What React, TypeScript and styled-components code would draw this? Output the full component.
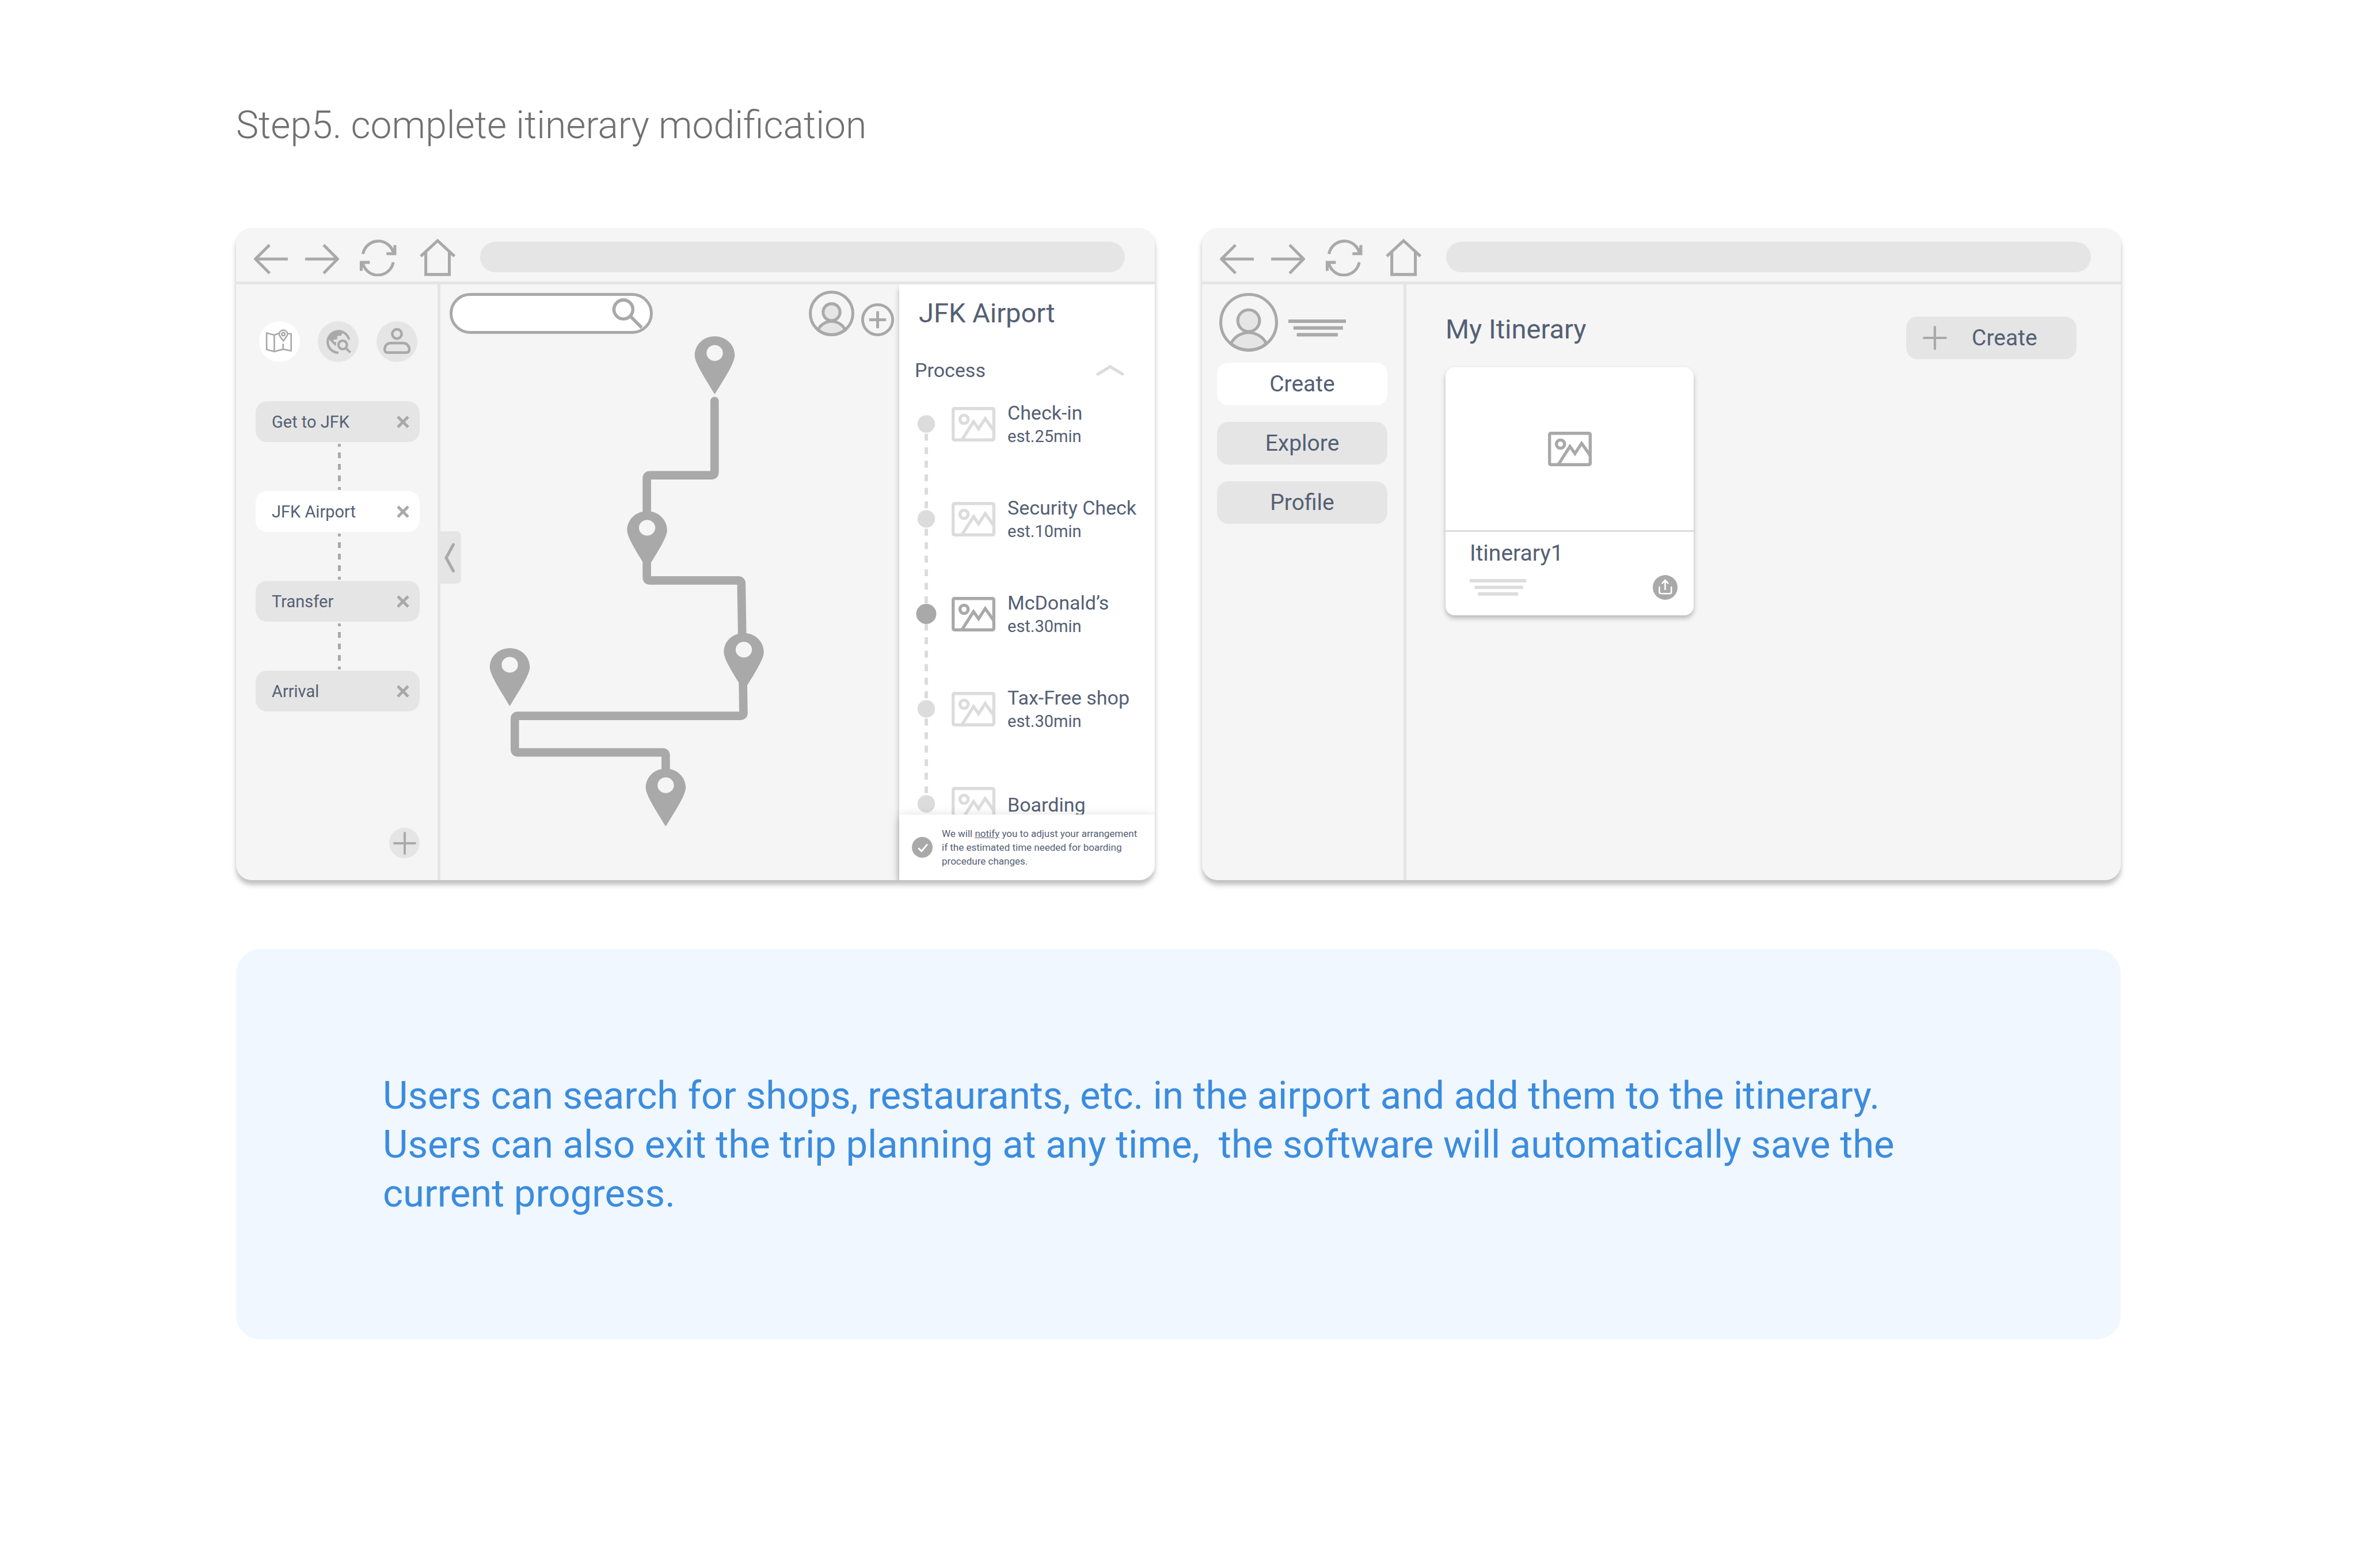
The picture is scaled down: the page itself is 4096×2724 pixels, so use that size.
import React from "react";
import styled, { createGlobalStyle } from "styled-components";
import { MdTravelExplore } from "react-icons/md";

const color = {
  line: "#a9a9a9",
  soft: "#dcdcdc",
  fill: "#e5e5e5",
  surface: "#f5f5f5",
  ink: "#546074",
  heading: "#707070",
  blue: "#3b8cde",
  note: "#f0f7ff",
};

const GlobalStyle = createGlobalStyle`
  * { box-sizing: border-box; }
  body { margin: 0; background: #fff; font-family: Roboto, "Liberation Sans", sans-serif; color: ${color.ink}; }
  h1, h2, h3, p, ul, ol { margin: 0; padding: 0; font-weight: 400; }
  ul, ol { list-style: none; }
  button, input { font: inherit; color: inherit; border: 0; padding: 0; margin: 0; background: none; }
  button { cursor: pointer; }
  svg { display: block; flex: none; fill: none; stroke: ${color.line}; }
`;

/* ---------- page ---------- */

const Page = styled.main`
  padding: 180px 412px 180px 410px;
`;

const StepTitle = styled.h1`
  font-size: 66px;
  line-height: 76px;
  font-weight: 300;
  color: ${color.heading};
`;

const Screens = styled.div`
  display: grid;
  grid-template-columns: 1fr 1fr;
  gap: 82px;
  margin-top: 140px;
`;

const Note = styled.p`
  margin-top: 120px;
  padding: 212px 255px 211px;
  border-radius: 43px;
  background: ${color.note};
  color: ${color.blue};
  font-size: 67px;
  line-height: 85px;
`;

const NoteLine = styled.span`
  display: block;
  white-space: nowrap;
`;

/* ---------- browser frame ---------- */

const Frame = styled.section`
  display: flex;
  flex-direction: column;
  overflow: hidden;
  border-radius: 27px;
  background: ${color.surface};
  box-shadow: 0 8px 9px rgba(0, 0, 0, 0.25);
`;

const Toolbar = styled.header`
  display: flex;
  align-items: center;
  gap: 38px;
  height: 98px;
  padding: 8px 52px 0 31px;
  border-bottom: 5px solid ${color.fill};
`;

const ToolbarNav = styled.nav`
  display: flex;
  gap: 30px;
`;

const AddressBar = styled.input`
  flex: 1;
  min-width: 0;
  height: 53px;
  padding: 0 26px;
  border-radius: 27px;
  background: ${color.fill};
  font-size: 29px;
`;

const FrameBody = styled.div`
  display: flex;
  flex: 1;
  min-height: 1035px;
`;

const Sidebar = styled.aside<{ $pad: string }>`
  display: flex;
  flex-direction: column;
  flex: none;
  width: 355px;
  padding: ${(p) => p.$pad};
  border-right: 5px solid ${color.fill};
`;

const BackIcon = () => (
  <svg width="59" height="66" viewBox="498 467 67 74" strokeWidth="5.7">
    <path d="M565 507.5H501M529 479.5 501 507.3 529 535.5" />
  </svg>
);

const ForwardIcon = () => (
  <svg width="59" height="66" viewBox="598 467 67 74" strokeWidth="5.7">
    <path d="M598 507.5H662M634.5 479.5 662 507.3 634.5 535.5" />
  </svg>
);

const RefreshIcon = () => (
  <svg width="75" height="66" viewBox="698.5 467 84.6 74" strokeWidth="5.7">
    <path d="M711.5 497.5A30.5 30.5 0 0 1 771.5 497M774 480V497H757.5M770.8 513.7A30.5 30.5 0 0 1 711 515M708 530.5V514H724.8" />
  </svg>
);

const HomeIcon = () => (
  <svg width="72" height="66" viewBox="817 467 81 74" strokeWidth="5.7">
    <path d="M824.8 502 857.6 471.5 890.6 502M834.6 494V537.6H880.6V494" />
  </svg>
);

function BrowserFrame({ label, children }: { label: string; children: React.ReactNode }) {
  return (
    <Frame aria-label={label}>
      <Toolbar>
        <ToolbarNav>
          <button aria-label="Back"><BackIcon /></button>
          <button aria-label="Forward"><ForwardIcon /></button>
          <button aria-label="Reload"><RefreshIcon /></button>
          <button aria-label="Home"><HomeIcon /></button>
        </ToolbarNav>
        <AddressBar aria-label="Address" />
      </Toolbar>
      <FrameBody>{children}</FrameBody>
    </Frame>
  );
}

/* ---------- shared icons ---------- */

const Avatar = ({ size, stroke }: { size: number; stroke: number }) => (
  <svg width={size} height={size} viewBox="0 0 116 116" strokeWidth={stroke}>
    <path d="M23 100A39 39 0 0 1 93 100A55 55 0 0 1 23 100Z" fill={color.fill} />
    <circle cx="58" cy="54.7" r="21.5" fill={color.fill} />
    <circle cx="58" cy="58" r={58 - stroke / 2} />
  </svg>
);

const Picture = ({ tone }: { tone: string }) => (
  <svg width="76" height="60" viewBox="0 0 85 67" strokeWidth="6" style={{ stroke: tone }}>
    <rect x="3" y="3" width="79" height="61" rx="2.5" />
    <circle cx="24.2" cy="24" r="8" />
    <path d="M20.5 63 42.6 28.5 52.4 42.5 65.3 22.5 82 46" />
  </svg>
);

const PlusIcon = ({ size, stroke }: { size: number; stroke: number }) => (
  <svg width={size} height={size} viewBox="0 0 40 40" strokeWidth={stroke} strokeLinecap="round">
    <path d="M20 2V38M2 20H38" />
  </svg>
);

const ScribbleIcon = ({ width, tone }: { width: number; tone: string }) => (
  <svg width={width} height={width * 0.4} viewBox="0 0 113 45" strokeWidth="6.8" style={{ stroke: tone }}>
    <path d="M0 9H113M10 22.2H107M16.5 35.5H97" />
  </svg>
);

/* ---------- planner screen ---------- */

const ModeRow = styled.div`
  display: flex;
  gap: 31px;
  padding-left: 6px;
`;

const ModeButton = styled.button<{ $active?: boolean }>`
  display: grid;
  place-items: center;
  width: 71px;
  height: 71px;
  border-radius: 50%;
  background: ${(p) => (p.$active ? "#fff" : color.fill)};
  color: ${color.line};
`;

const GlobeIcon = styled(MdTravelExplore)`
  width: 50px;
  height: 50px;
  fill: ${color.line};
  stroke: none;
`;

const StopList = styled.ol`
  margin-top: 68px;
`;

const Stop = styled.li<{ $active?: boolean }>`
  display: flex;
  align-items: center;
  justify-content: space-between;
  height: 71px;
  padding: 0 18px 0 28px;
  border-radius: 20px;
  background: ${(p) => (p.$active ? "#fff" : color.fill)};
  font-size: 29px;
  line-height: 34px;
`;

const Connector = styled.li`
  height: 85px;
  padding: 3px 0 0 143px;
`;

const AddStop = styled.button`
  display: grid;
  place-items: center;
  align-self: flex-end;
  width: 53px;
  height: 53px;
  margin-top: auto;
  border-radius: 50%;
  background: ${color.fill};
`;

const MapArea = styled.div`
  position: relative;
  flex: 1;
  min-width: 0;
`;

const MapTools = styled.div`
  display: flex;
  align-items: center;
  justify-content: space-between;
  height: 90px;
  padding: 11px 9px 0 16px;
`;

const SearchBox = styled.div`
  display: flex;
  align-items: center;
  width: 353px;
  height: 71px;
  padding-right: 13px;
  border: 5px solid ${color.line};
  border-radius: 36px;
  background: #fff;
`;

const SearchInput = styled.input`
  flex: 1;
  min-width: 0;
  padding-left: 28px;
  font-size: 29px;
`;

const Account = styled.div`
  display: flex;
  align-items: flex-end;
  gap: 12px;
`;

const CollapseTab = styled.button`
  position: absolute;
  left: 0;
  top: 429px;
  display: grid;
  place-items: center;
  width: 36px;
  height: 91px;
  padding-right: 5px;
  border-radius: 0 8px 8px 0;
  background: ${color.fill};
`;

const RouteDrawing = styled.svg`
  width: 100%;
  overflow: visible;
`;

const Panel = styled.aside`
  display: flex;
  flex-direction: column;
  flex: none;
  width: 444px;
  background: #fff;
  box-shadow: 0 8px 9px rgba(0, 0, 0, 0.25);
`;

const PanelTitle = styled.h2`
  padding: 21px 0 0 34px;
  font-size: 47px;
  line-height: 58px;
`;

const ProcessHeader = styled.div`
  display: flex;
  align-items: center;
  justify-content: space-between;
  margin-top: 49px;
  padding: 0 53px 0 27px;
`;

const ProcessTitle = styled.h3`
  font-size: 34px;
  line-height: 42px;
`;

const StepsArea = styled.div`
  display: flex;
  flex: 1 1 0;
  align-items: flex-start;
  gap: 26px;
  min-height: 0;
  margin-top: -10px;
  padding-left: 29px;
  overflow: hidden;
`;

const StepRow = styled.li`
  display: flex;
  align-items: center;
  gap: 21px;
  height: 165px;
`;

const StepText = styled.div`
  padding-top: 3px;
`;

const StepName = styled.p`
  font-size: 34px;
  line-height: 41px;
  white-space: nowrap;
`;

const StepTime = styled.p`
  font-size: 29px;
  line-height: 41px;
`;

const Notice = styled.footer`
  display: flex;
  align-items: center;
  gap: 16px;
  height: 114px;
  padding-left: 22px;
  background: #fff;
  box-shadow: 0 4px 18px rgba(0, 0, 0, 0.2);
`;

const NoticeText = styled.p`
  font-size: 17px;
  line-height: 24px;
`;

const NoticeLine = styled.span`
  display: block;
  white-space: nowrap;
`;

const NoticeLink = styled.a`
  color: inherit;
  text-decoration: underline;
`;

const MapIcon = () => (
  <svg width="71" height="71" viewBox="0 0 80 80" strokeWidth="3" strokeLinejoin="round">
    <path d="M38.5 24 29.8 27 14.8 23V55.5L29.8 59.5 47 54.8 62.8 58V25.2L57 24M29.8 27V59.5M47 44V54.8" />
    <path d="M47.5 38.5C43 32 39.2 28.5 39.2 24.7A8.4 8.4 0 0 1 55.8 24.7C55.8 28.5 52 32 47.5 38.5Z" />
    <circle cx="47.5" cy="25.3" r="3" />
  </svg>
);

const PersonIcon = () => (
  <svg width="71" height="71" viewBox="0 0 80 80" strokeWidth="5">
    <circle cx="40" cy="24.9" r="9.2" />
    <path d="M28 42.8H52C59 42.8 64 48 64.3 55C64.3 59.5 62 61.5 58 61.5H22C18 61.5 16 59.5 16 55C16 48 21 42.8 28 42.8Z" />
  </svg>
);

const CloseIcon = () => (
  <svg width="22" height="22" viewBox="0 0 22 22" strokeWidth="5">
    <path d="M2 2 20 20M20 2 2 20" />
  </svg>
);

const SearchIcon = () => (
  <svg width="53" height="53" viewBox="1199 583 60 60" strokeWidth="6.4">
    <circle cx="1221.5" cy="605.2" r="18.6" />
    <path d="M1235 618.5 1257.5 641" />
  </svg>
);

const AddCircleIcon = () => (
  <svg width="57" height="57" viewBox="0 0 64 64" strokeWidth="5.5">
    <circle cx="32" cy="32" r="29.3" />
    <path d="M32 15.5V48.5M15.5 32H48.5" />
  </svg>
);

const PINS = [
  { x: 1400.5, y: 659.4 },
  { x: 1268, y: 1001.8 },
  { x: 1457.5, y: 1240.7 },
  { x: 999, y: 1270.4 },
  { x: 1304.5, y: 1506.4 },
];

function Route() {
  return (
    <RouteDrawing viewBox="863 659 899 965" aria-label="Route through the airport">
      <path
        strokeWidth="16.5"
        strokeLinecap="round"
        strokeLinejoin="round"
        d="M1400.2 786V925.6Q1400.2 931.6 1394.2 931.6H1273.5Q1267.5 931.6 1267.5 937.6V1131.7Q1267.5 1137.7 1273.5 1137.7H1446.5Q1452.6 1137.7 1452.7 1143.7L1456.8 1397Q1457 1403 1451 1403H1014.8Q1008.8 1403 1008.8 1409V1468.7Q1008.8 1474.7 1014.8 1474.7H1298.5Q1304.5 1474.7 1304.5 1480.7V1520"
      />
      {PINS.map((pin) => (
        <g key={pin.x} transform={`translate(${pin.x} ${pin.y})`} stroke="none">
          <path
            fill={color.line}
            stroke="none"
            d="M0 0C22 0 39.2 16.5 39.2 37.5C39.2 52 18 84 0 113.5C-18 84-39.2 52-39.2 37.5C-39.2 16.5-22 0 0 0Z"
          />
          <ellipse cy="32.6" rx="16" ry="15.4" fill={color.surface} stroke="none" />
        </g>
      ))}
    </RouteDrawing>
  );
}

const STOPS = ["Get to JFK", "JFK Airport", "Transfer", "Arrival"];

const STEPS = [
  { name: "Check-in", time: "est.25min" },
  { name: "Security Check", time: "est.10min" },
  { name: "McDonald’s", time: "est.30min", current: true },
  { name: "Tax-Free shop", time: "est.30min" },
  { name: "Boarding" },
];

const STEP_HEIGHT = 165;

function StepRail() {
  const center = (i: number) => STEP_HEIGHT / 2 + i * STEP_HEIGHT;
  return (
    <svg width="36" height={STEP_HEIGHT * STEPS.length} aria-hidden="true">
      {STEPS.slice(1).map((step, i) => (
        <path
          key={step.name}
          d={`M18 ${center(i) + 17}V${center(i) + 147}`}
          strokeWidth="6"
          strokeDasharray="12 11.5"
          style={{ stroke: color.soft }}
        />
      ))}
      {STEPS.map((step, i) => (
        <circle
          key={step.name}
          cx="18"
          cy={center(i)}
          r={step.current ? 17.5 : 15.2}
          fill={step.current ? color.line : color.soft}
          style={{ stroke: "none" }}
        />
      ))}
    </svg>
  );
}

function PlannerScreen() {
  return (
    <BrowserFrame label="Itinerary planner">
      <Sidebar $pad="64px 31px 38px 34px">
        <ModeRow>
          <ModeButton $active aria-label="Map"><MapIcon /></ModeButton>
          <ModeButton aria-label="Explore"><GlobeIcon /></ModeButton>
          <ModeButton aria-label="Profile"><PersonIcon /></ModeButton>
        </ModeRow>
        <StopList>
          {STOPS.map((stop, i) => (
            <React.Fragment key={stop}>
              {i > 0 && (
                <Connector aria-hidden="true">
                  <svg width="5" height="80" strokeWidth="5" strokeDasharray="10 10" strokeDashoffset="5">
                    <path d="M2.5 0V80" />
                  </svg>
                </Connector>
              )}
              <Stop $active={stop === "JFK Airport"}>
                {stop}
                <button aria-label={`Remove ${stop}`}><CloseIcon /></button>
              </Stop>
            </React.Fragment>
          ))}
        </StopList>
        <AddStop aria-label="Add stop"><PlusIcon size={40} stroke={4} /></AddStop>
      </Sidebar>
      <MapArea>
        <MapTools>
          <SearchBox>
            <SearchInput type="search" aria-label="Search the map" />
            <button aria-label="Search"><SearchIcon /></button>
          </SearchBox>
          <Account>
            <button aria-label="Account"><Avatar size={79} stroke={7.4} /></button>
            <button aria-label="Add place"><AddCircleIcon /></button>
          </Account>
        </MapTools>
        <Route />
        <CollapseTab aria-label="Collapse sidebar">
          <svg width="20" height="52" viewBox="0 0 20 52" strokeWidth="5" strokeLinecap="round">
            <path d="M16.5 3 4 26 16.5 49" />
          </svg>
        </CollapseTab>
      </MapArea>
      <Panel>
        <PanelTitle>JFK Airport</PanelTitle>
        <ProcessHeader>
          <ProcessTitle>Process</ProcessTitle>
          <button aria-label="Collapse process">
            <svg width="49" height="19" viewBox="0 0 49 19" strokeWidth="5" strokeLinecap="round" style={{ stroke: color.soft }}>
              <path d="M3 16 24.5 3 46 16" />
            </svg>
          </button>
        </ProcessHeader>
        <StepsArea>
          <StepRail />
          <ol>
            {STEPS.map((step) => (
              <StepRow key={step.name}>
                <Picture tone={step.current ? color.line : color.soft} />
                <StepText>
                  <StepName>{step.name}</StepName>
                  {step.time && <StepTime>{step.time}</StepTime>}
                </StepText>
              </StepRow>
            ))}
          </ol>
        </StepsArea>
        <Notice>
          <svg width="36" height="36" viewBox="0 0 40 40" strokeWidth="3.2">
            <circle cx="20" cy="20" r="20" fill={color.line} style={{ stroke: "none" }} />
            <path d="M12.5 21.5 18.7 27.5 30 14" style={{ stroke: "#fff" }} />
          </svg>
          <NoticeText>
            <NoticeLine>We will <NoticeLink href="#notify">notify</NoticeLink> you to adjust your arrangement</NoticeLine>
            <NoticeLine>if the estimated time needed for boarding</NoticeLine>
            <NoticeLine>procedure changes.</NoticeLine>
          </NoticeText>
        </Notice>
      </Panel>
    </BrowserFrame>
  );
}

/* ---------- itinerary screen ---------- */

const UserRow = styled.div`
  display: flex;
  align-items: center;
  gap: 18px;
  padding: 0 0 0 4px;
`;

const UserLines = styled.div`
  padding-top: 20px;
`;

const NavList = styled.nav`
  display: grid;
  gap: 29px;
  margin-top: 19px;
`;

const PillButton = styled.button<{ $active?: boolean; $leadingIcon?: boolean }>`
  display: flex;
  align-items: center;
  justify-content: ${(p) => (p.$leadingIcon ? "flex-start" : "center")};
  gap: 43px;
  width: 296px;
  height: 74px;
  padding-left: ${(p) => (p.$leadingIcon ? "29px" : "0")};
  border-radius: 20px;
  background: ${(p) => (p.$active ? "#fff" : color.fill)};
  font-size: 39px;
  line-height: 48px;
`;

const Content = styled.div`
  flex: 1;
  min-width: 0;
  padding: 56px 77px 0 68px;
`;

const ContentHeader = styled.div`
  display: flex;
  align-items: flex-start;
  justify-content: space-between;
`;

const ContentTitle = styled.h2`
  font-size: 47px;
  line-height: 44px;
`;

const Card = styled.article`
  width: 431px;
  margin-top: 14px;
  border-radius: 16px;
  background: #fff;
  box-shadow: 0 5px 9px rgba(0, 0, 0, 0.25);
`;

const CardPicture = styled.div`
  display: grid;
  place-items: center;
  height: 286px;
  border-bottom: 3px solid ${color.soft};
`;

const CardBody = styled.div`
  height: 145px;
  padding: 14px 28px 0 42px;
`;

const CardTitle = styled.h3`
  font-size: 39px;
  line-height: 46px;
`;

const CardFooter = styled.div`
  display: flex;
  align-items: center;
  justify-content: space-between;
  margin-top: 15px;
`;

function ItineraryScreen() {
  return (
    <BrowserFrame label="My itineraries">
      <Sidebar $pad="15px 28px 38px 26px">
        <UserRow>
          <button aria-label="Account"><Avatar size={102} stroke={5.8} /></button>
          <UserLines><ScribbleIcon width={100} tone={color.line} /></UserLines>
        </UserRow>
        <NavList>
          <PillButton $active>Create</PillButton>
          <PillButton>Explore</PillButton>
          <PillButton>Profile</PillButton>
        </NavList>
      </Sidebar>
      <Content>
        <ContentHeader>
          <ContentTitle>My Itinerary</ContentTitle>
          <PillButton $leadingIcon><PlusIcon size={42} stroke={4} />Create</PillButton>
        </ContentHeader>
        <Card>
          <CardPicture><Picture tone={color.line} /></CardPicture>
          <CardBody>
            <CardTitle>Itinerary1</CardTitle>
            <CardFooter>
              <ScribbleIcon width={98} tone={color.soft} />
              <button aria-label="Share Itinerary1">
                <svg width="43" height="43" viewBox="0 0 49 49" strokeWidth="3" strokeLinecap="round" strokeLinejoin="round" style={{ stroke: "#fff" }}>
                  <circle cx="24.5" cy="24.5" r="24.5" fill={color.line} stroke="none" />
                  <path d="M24.5 28.5V10M19 16.2 24.5 10 30 16.2M13 24V33.5Q13 36.7 16.2 36.7H33.5Q36.7 36.7 36.7 33.5V24" />
                </svg>
              </button>
            </CardFooter>
          </CardBody>
        </Card>
      </Content>
    </BrowserFrame>
  );
}

export default function App() {
  return (
    <>
      <GlobalStyle />
      <Page>
        <StepTitle>Step5. complete itinerary modification</StepTitle>
        <Screens>
          <PlannerScreen />
          <ItineraryScreen />
        </Screens>
        <Note>
          <NoteLine>Users can search for shops, restaurants, etc. in the airport and add them to the itinerary.</NoteLine>
          <NoteLine>Users can also exit the trip planning at any time,&nbsp; the software will automatically save the</NoteLine>
          <NoteLine>current progress.</NoteLine>
        </Note>
      </Page>
    </>
  );
}
